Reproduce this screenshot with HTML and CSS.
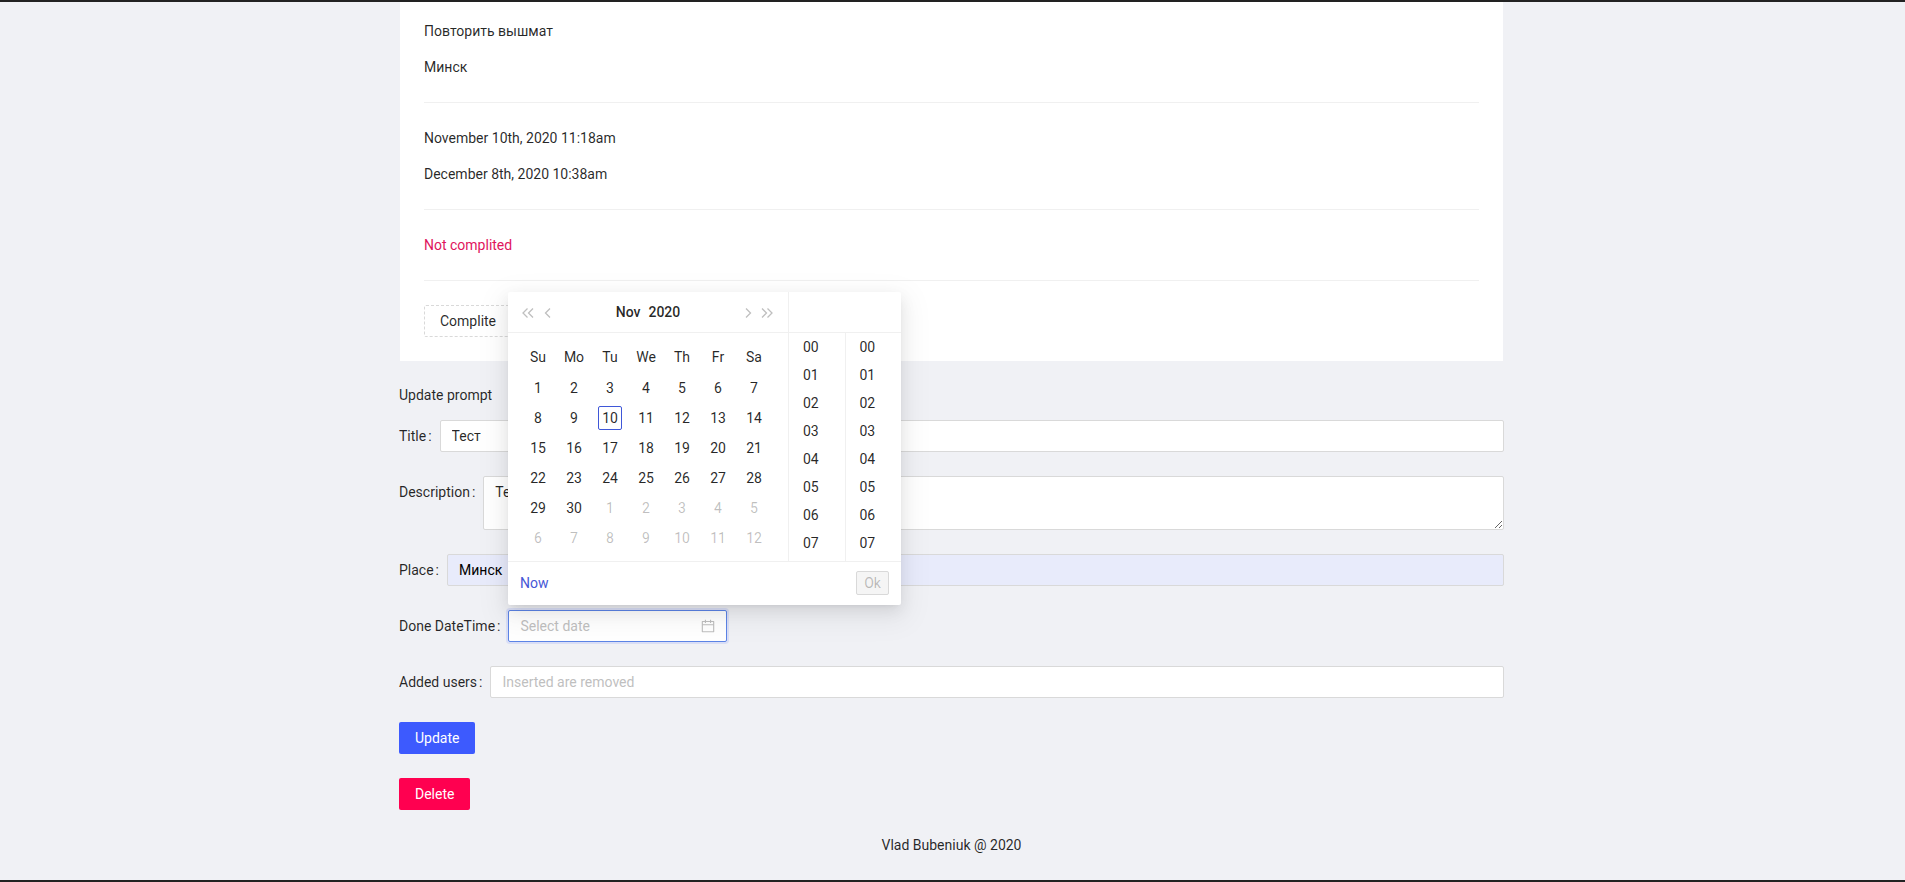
FILE: index.html
```html
<!DOCTYPE html>
<html lang="en">
<head>
<meta charset="utf-8">
<title>Update prompt</title>
<link rel="stylesheet" href="styles.css">
</head>
<body>
<div class="edge"></div>
<main class="content">
  <section class="card">
    <p>Повторить вышмат</p>
    <p>Минск</p>
    <hr class="divider">
    <p>November 10th, 2020 11:18am</p>
    <p>December 8th, 2020 10:38am</p>
    <hr class="divider">
    <p class="status">Not complited</p>
    <hr class="divider">
    <button class="btn btn-dashed" type="button">Complite</button>
  </section>

  <p class="form-title">Update prompt</p>
  <form class="form">
    <div class="form-item">
      <label class="form-label">Title</label>
      <input class="input" type="text" value="Тест">
    </div>
    <div class="form-item">
      <label class="form-label">Description</label>
      <textarea class="input textarea">Тест</textarea>
    </div>
    <div class="form-item">
      <label class="form-label">Place</label>
      <input class="input input-autofilled" type="text" value="Минск">
    </div>
    <div class="form-item">
      <label class="form-label">Done DateTime</label>
      <div class="picker">
        <input class="picker-input" type="text" placeholder="Select date">
        <svg class="picker-icon" viewBox="64 64 896 896" width="14" height="14" fill="currentColor"><path d="M880 184H712v-64c0-4.4-3.6-8-8-8h-56c-4.4 0-8 3.6-8 8v64H384v-64c0-4.4-3.6-8-8-8h-56c-4.4 0-8 3.6-8 8v64H144c-17.7 0-32 14.3-32 32v664c0 17.7 14.3 32 32 32h736c17.7 0 32-14.3 32-32V216c0-17.7-14.3-32-32-32zm-40 656H184V460h656v380zM184 392V256h128v48c0 4.4 3.6 8 8 8h56c4.4 0 8-3.6 8-8v-48h256v48c0 4.4 3.6 8 8 8h56c4.4 0 8-3.6 8-8v-48h128v136H184z"/></svg>
      </div>
    </div>
    <div class="form-item">
      <label class="form-label">Added users</label>
      <input class="input" type="text" placeholder="Inserted are removed">
    </div>
    <div class="form-item">
      <button class="btn btn-primary" type="button">Update</button>
    </div>
    <div class="form-item">
      <button class="btn btn-danger" type="button">Delete</button>
    </div>
  </form>
  <footer class="footer">Vlad Bubeniuk @ 2020</footer>
</main>
<div class="edge"></div>

<div class="dropdown">
  <div class="panels">
    <div class="date-panel">
      <div class="date-header">
        <svg class="arrow" width="12" height="10" viewBox="0 0 12 10"><path d="M5.5 0.5 1 5l4.500 4.500M11 0.500 6.500 5 11 9.500"/></svg>
        <svg class="arrow arrow-prev" width="7" height="10" viewBox="0 0 7 10"><path d="M6 0.500 1.500 5 6 9.500"/></svg>
        <div class="date-title"><span>Nov</span><span>2020</span></div>
        <svg class="arrow arrow-next" width="7" height="10" viewBox="0 0 7 10"><path d="M1 0.500 5.500 5 1 9.500"/></svg>
        <svg class="arrow" width="12" height="10" viewBox="0 0 12 10"><path d="M1 0.500 5.500 5 1 9.500M6.500 0.500 11 5l-4.500 4.500"/></svg>
      </div>
      <div class="date-body">
        <div class="calendar">
          <span class="wd">Su</span><span class="wd">Mo</span><span class="wd">Tu</span><span class="wd">We</span><span class="wd">Th</span><span class="wd">Fr</span><span class="wd">Sa</span>
          <span class="day"><i>1</i></span><span class="day"><i>2</i></span><span class="day"><i>3</i></span><span class="day"><i>4</i></span><span class="day"><i>5</i></span><span class="day"><i>6</i></span><span class="day"><i>7</i></span>
          <span class="day"><i>8</i></span><span class="day"><i>9</i></span><span class="day today"><i>10</i></span><span class="day"><i>11</i></span><span class="day"><i>12</i></span><span class="day"><i>13</i></span><span class="day"><i>14</i></span>
          <span class="day"><i>15</i></span><span class="day"><i>16</i></span><span class="day"><i>17</i></span><span class="day"><i>18</i></span><span class="day"><i>19</i></span><span class="day"><i>20</i></span><span class="day"><i>21</i></span>
          <span class="day"><i>22</i></span><span class="day"><i>23</i></span><span class="day"><i>24</i></span><span class="day"><i>25</i></span><span class="day"><i>26</i></span><span class="day"><i>27</i></span><span class="day"><i>28</i></span>
          <span class="day"><i>29</i></span><span class="day"><i>30</i></span><span class="day out"><i>1</i></span><span class="day out"><i>2</i></span><span class="day out"><i>3</i></span><span class="day out"><i>4</i></span><span class="day out"><i>5</i></span>
          <span class="day out"><i>6</i></span><span class="day out"><i>7</i></span><span class="day out"><i>8</i></span><span class="day out"><i>9</i></span><span class="day out"><i>10</i></span><span class="day out"><i>11</i></span><span class="day out"><i>12</i></span>
        </div>
      </div>
    </div>
    <div class="time-panel">
      <div class="time-header"></div>
      <div class="time-cols">
        <ul class="time-col"><li>00</li><li>01</li><li>02</li><li>03</li><li>04</li><li>05</li><li>06</li><li>07</li></ul>
        <ul class="time-col"><li>00</li><li>01</li><li>02</li><li>03</li><li>04</li><li>05</li><li>06</li><li>07</li></ul>
      </div>
    </div>
  </div>
  <div class="dropdown-footer">
    <a class="now">Now</a>
    <button class="ok" type="button" disabled>Ok</button>
  </div>
</div>
</body>
</html>
```

FILE: styles.css
```css
* { box-sizing: border-box; }
html, body { margin: 0; padding: 0; }
body {
  height: 882px;
  overflow: hidden;
  display: flex;
  flex-direction: column;
  background: #f0f1f5;
  color: rgba(0,0,0,.85);
  font: 14px/22px Roboto, sans-serif;
}
.edge { height: 2px; flex: none; background: #222; }
.content { flex: 1; margin-left: 399px; width: 1105px; }

.card { background: #fff; margin: 0 1px; padding: 18px 24px 24px 24px; }
.card p { margin: 0 0 14px; }
.card p:has(+ .divider) { margin-bottom: 0; }
.divider { height: 1px; margin: 24px 0; border: 0; background: #f0f0f0; }
.card .status { color: #e0145c; }

.form-title { margin: 23px 0 14px; }
.form-item { display: flex; align-items: flex-start; margin-bottom: 24px; }
.form-label { height: 32px; line-height: 32px; white-space: nowrap; flex: none; }
.form-label::after { content: ":"; margin: 0 8px 0 2px; position: relative; top: -.5px; }

.input {
  flex: 1;
  min-width: 0;
  height: 32px;
  padding: 4px 11px;
  border: 1px solid #d9d9d9;
  border-radius: 2px;
  background: #fff;
  color: rgba(0,0,0,.85);
  font: inherit;
  outline: 0;
}
.input::placeholder, .picker-input::placeholder { color: #bfbfbf; opacity: 1; }
.textarea { height: 54px; display: block; resize: vertical; }
.input-autofilled { background: #e8ebfb; color: #000; }

.picker {
  display: flex;
  align-items: center;
  width: 219px;
  height: 32px;
  padding: 4px 11px;
  background: #fff;
  border: 1px solid #5c84e6;
  border-radius: 2px;
  box-shadow: 0 0 0 2px rgba(61,90,254,.12);
}
.picker-input { flex: 1; min-width: 0; border: 0; padding: 0; outline: 0; font: inherit; color: inherit; background: transparent; }
.picker-icon { color: #bfbfbf; flex: none; }

.btn {
  height: 32px;
  padding: 4px 15px;
  border: 1px solid transparent;
  border-radius: 2px;
  font: inherit;
}
.btn-dashed { background: #fff; border: 1px dashed #d9d9d9; color: rgba(0,0,0,.85); }
.btn-primary { background: #3d5afe; color: #fff; }
.btn-danger { background: #ff0050; color: #fff; }

.footer { text-align: center; }

.dropdown {
  position: absolute;
  top: 292px;
  left: 508px;
  width: 393px;
  background: #fff;
  border-radius: 2px;
  box-shadow: 0 3px 6px -4px rgba(0,0,0,.12), 0 6px 16px 0 rgba(0,0,0,.08), 0 9px 28px 8px rgba(0,0,0,.05);
}
.panels { display: flex; }
.date-panel { width: 280px; }
.date-header {
  display: flex;
  align-items: center;
  height: 41px;
  padding: 2px 15px 0 14px;
  border-bottom: 1px solid #f0f0f0;
}
.arrow { flex: none; fill: none; stroke: #bfbfbf; stroke-width: 1.3; }
.arrow-prev { margin-left: 10px; }
.arrow-next { margin-right: 9px; }
.date-title {
  flex: 1;
  display: flex;
  justify-content: center;
  gap: 8px;
  margin-top: -3px;
  font-weight: 500;
}
.date-body { padding: 8px 12px; }
.calendar { display: grid; grid-template-columns: repeat(7, 36px); grid-template-rows: 32px repeat(6, 30px); }
.wd, .day { display: flex; align-items: center; justify-content: center; }
.day i { display: block; min-width: 24px; height: 24px; line-height: 24px; text-align: center; font-style: normal; border-radius: 2px; }
.today i { line-height: 22px; border: 1px solid #3f57d8; }
.out { color: rgba(0,0,0,.25); }

.time-panel { width: 113px; border-left: 1px solid #f0f0f0; }
.time-header { height: 41px; border-bottom: 1px solid #f0f0f0; }
.time-cols { display: flex; height: 228px; }
.time-col { flex: 1; margin: 0; padding: 0; list-style: none; overflow: hidden; }
.time-col + .time-col { border-left: 1px solid #f0f0f0; }
.time-col li { height: 28px; line-height: 28px; padding-left: 14px; }

.dropdown-footer {
  display: flex;
  align-items: center;
  justify-content: space-between;
  height: 44px;
  padding: 0 12px 1px;
  border-top: 1px solid #f0f0f0;
}
.now { color: #4657d6; }
.ok {
  width: 33px;
  height: 24px;
  padding: 0;
  background: #f5f5f5;
  border: 1px solid #d9d9d9;
  border-radius: 2px;
  color: rgba(0,0,0,.25);
  font: inherit;
}
```
